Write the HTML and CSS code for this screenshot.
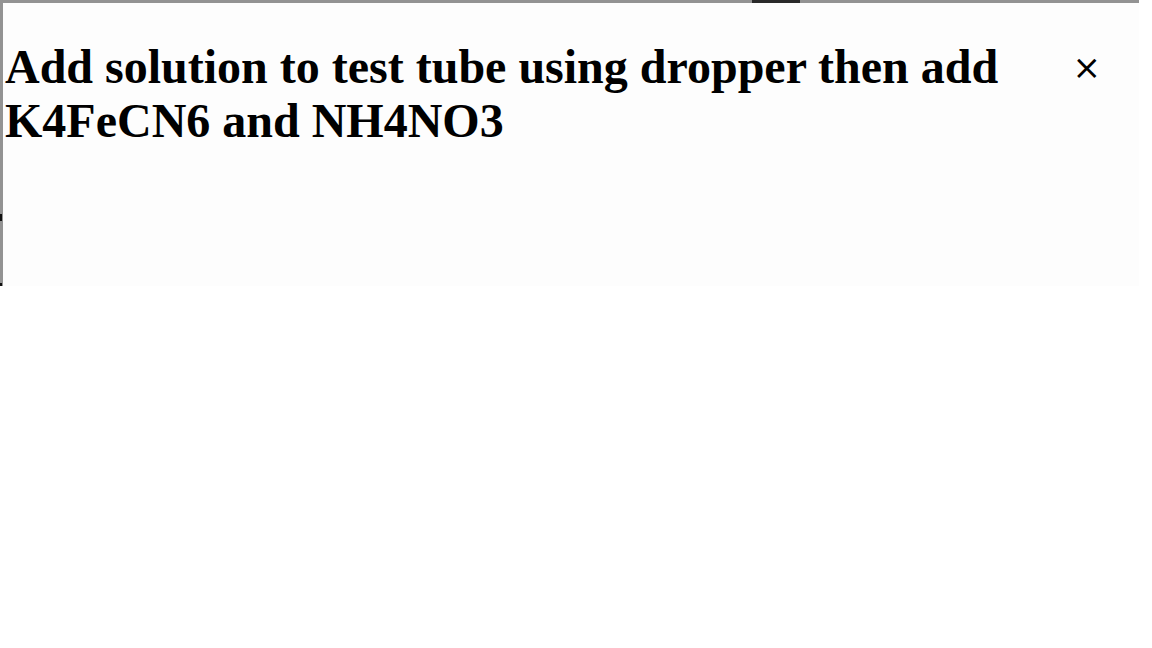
FILE: index.html
```html
<!DOCTYPE html>
<html>
<head>
<meta charset="utf-8">
<link rel="stylesheet" href="styles.css">
</head>
<body>
<div class="modal">
  <div class="tab"></div>
  <div class="mark mark-a"></div>
  <div class="mark mark-b"></div>
  <div class="header">
    <h1 class="title">Add solution to test tube using dropper then add K4FeCN6 and NH4NO3</h1>
    <button class="close">×</button>
  </div>
</div>
</body>
</html>
```
FILE: styles.css
```css
html, body {
  margin: 0;
  padding: 0;
  background: #ffffff;
}
.modal {
  position: relative;
  width: 1136px;
  height: 283px;
  border-top: 3px solid #939393;
  border-left: 3px solid #939393;
  background: #fdfdfd;
}
.tab {
  position: absolute;
  top: -3px;
  left: 749px;
  width: 48px;
  height: 3px;
  background: #2a2a2a;
}
.mark {
  position: absolute;
  left: -3px;
  width: 2px;
  background: #111;
}
.mark-a {
  top: 211px;
  height: 7px;
}
.mark-b {
  top: 280px;
  height: 3px;
}
.header {
  display: flex;
  align-items: flex-start;
  padding: 0 0 0 2px;
}
.title {
  flex: 1;
  margin: 37px 0 0 0;
  font-family: "Liberation Serif", "Times New Roman", serif;
  font-weight: bold;
  font-size: 48px;
  line-height: 54px;
  color: #000;
}
.close {
  margin: 44px 38px 0 60px;
  padding: 0;
  border: none;
  background: transparent;
  font-family: "DejaVu Sans", sans-serif;
  font-size: 34px;
  line-height: 40px;
  color: #000;
}
```
